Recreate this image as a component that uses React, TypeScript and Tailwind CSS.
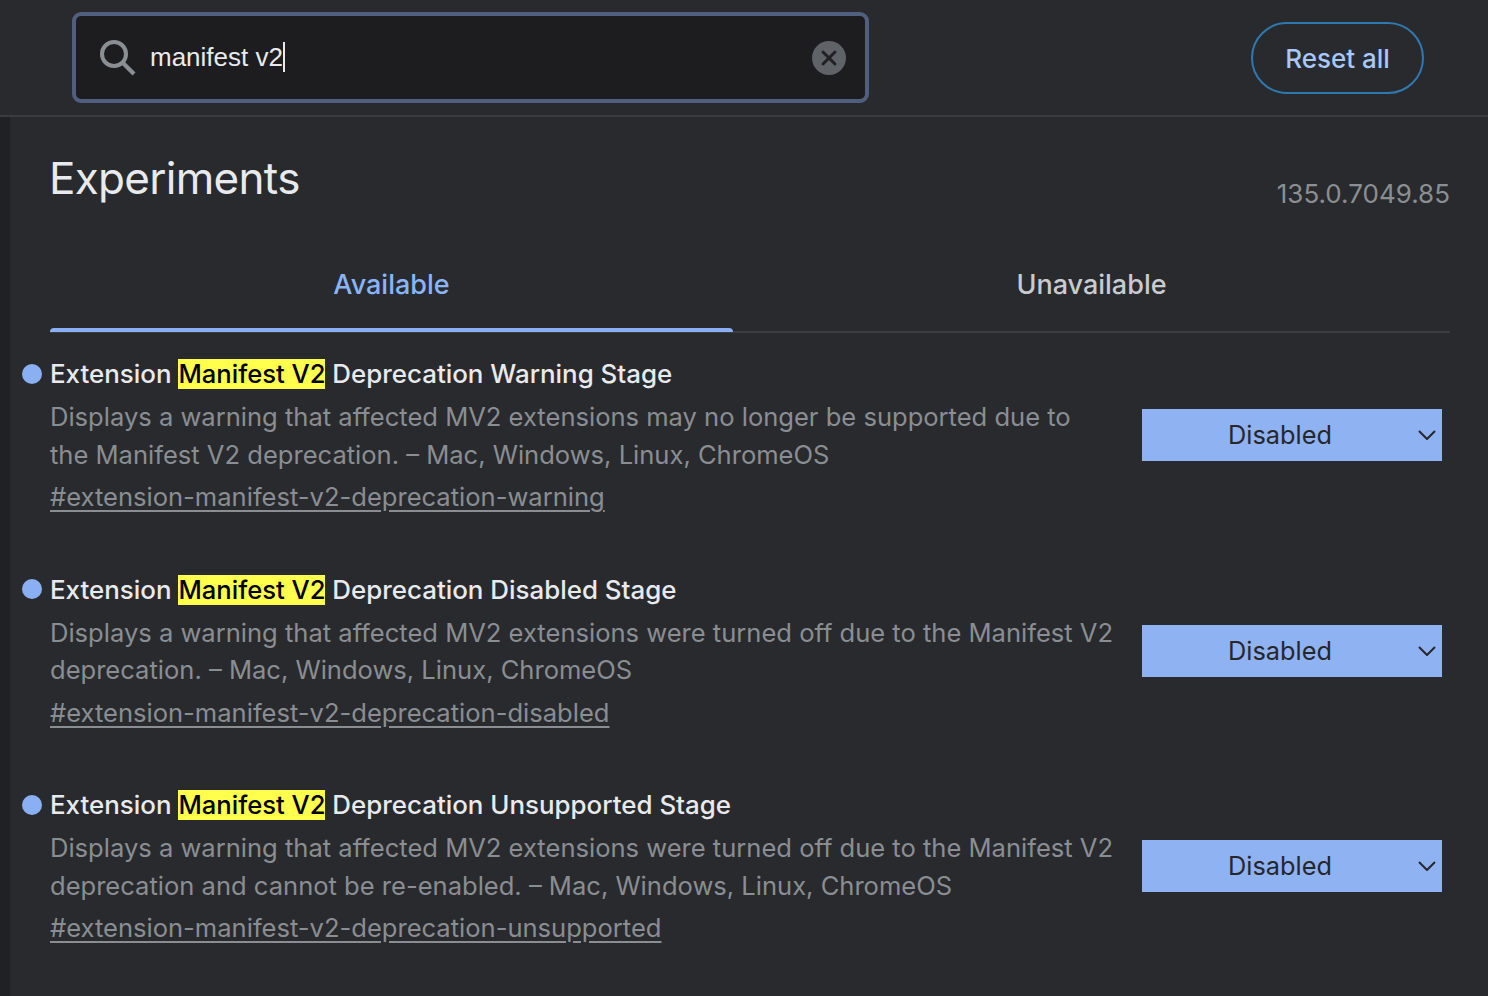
import { X } from "lucide-react";

const experiments = [
  {
    stage: "Warning",
    lines: [
      "Displays a warning that affected MV2 extensions may no longer be supported due to",
      "the Manifest V2 deprecation. – Mac, Windows, Linux, ChromeOS",
    ],
    anchor: "#extension-manifest-v2-deprecation-warning",
  },
  {
    stage: "Disabled",
    lines: [
      "Displays a warning that affected MV2 extensions were turned off due to the Manifest V2",
      "deprecation. – Mac, Windows, Linux, ChromeOS",
    ],
    anchor: "#extension-manifest-v2-deprecation-disabled",
  },
  {
    stage: "Unsupported",
    lines: [
      "Displays a warning that affected MV2 extensions were turned off due to the Manifest V2",
      "deprecation and cannot be re-enabled. – Mac, Windows, Linux, ChromeOS",
    ],
    anchor: "#extension-manifest-v2-deprecation-unsupported",
  },
];

function SearchIcon() {
  return (
    <svg width="36" height="36" viewBox="0 0 36 36" fill="none" stroke="#8a8f93" className="shrink-0">
      <circle cx="14" cy="14" r="12" strokeWidth="4" />
      <path d="M23 23 L34 34" strokeWidth="4.2" />
    </svg>
  );
}

function ExperimentRow({ stage, lines, anchor }: (typeof experiments)[number]) {
  return (
    <div className="flex h-[215.5px] items-start">
      <span className="mt-[7.5px] ml-3 h-5 w-5 shrink-0 rounded-full bg-[#8ab0f3]" />
      <div className="ml-2 w-[1092px] shrink-0">
        <h2 className="h-[34px] text-[25.9px] leading-[35.5px] font-medium whitespace-pre text-[#e8eaed]">
          Extension{" "}
          <mark className="inline-block h-[30px] bg-[#ffff4d] text-[25.6px] leading-[30px] text-black">Manifest V2</mark>{" "}
          Deprecation {stage} Stage
        </h2>
        <p className="mt-2 text-[25.55px] leading-[37.5px] whitespace-nowrap text-[#8a8e92]">
          {lines[0]}
          <br />
          {lines[1]}
        </p>
        <a className="mt-[5px] block text-[25.55px] leading-[38px] whitespace-nowrap text-[#8a8e92] underline underline-offset-[4px]">
          {anchor}
        </a>
      </div>
      <div className="relative mt-[53px] flex h-[52px] w-[300px] shrink-0 items-center justify-center bg-[#8fb2f2] pr-[24px] text-[25.3px] text-[#25272b]">
        Disabled
        <svg width="18" height="10" viewBox="0 0 18 10" fill="none" stroke="#25272b" strokeWidth="2" className="absolute top-[21px] right-[6px]">
          <path d="M1 1 L9 9 L17 1" />
        </svg>
      </div>
    </div>
  );
}

export default function App() {
  return (
    <div className="h-[996px] overflow-hidden bg-[#292a2e] font-['Inter',sans-serif] text-[#e8eaed]">
      <header className="flex h-[117px] items-start border-b-2 border-[#3b3c3e] pt-3 pl-[72px]">
        <div className="flex h-[91px] w-[797px] items-center rounded-[9px] border-4 border-[#505f80] bg-[#1d1d1f] pr-[19px] pl-6">
          <SearchIcon />
          <span className="ml-3.5 font-['Liberation_Sans',sans-serif] text-[26px] text-[#e8eaed]">manifest v2</span>
          <span className="h-[30px] w-0.5 -translate-y-px bg-[#e8eaed]" />
          <span className="ml-auto flex h-[34px] w-[34px] items-center justify-center rounded-full bg-[#5f6368] text-[#202124]">
            <X size={24} strokeWidth={3} />
          </span>
        </div>
        <button className="mt-[10px] ml-[382px] h-[72px] w-[173px] rounded-full border-2 border-[#2f79b0] text-[26px] font-medium text-[#a8c7fa]">
          Reset all
        </button>
      </header>
      <div className="flex">
        <aside className="h-[879px] w-2.5 shrink-0 bg-[#202124]" />
        <main className="w-[1478px] pr-[38px]">
          <div className="flex h-[115px] items-start justify-between pl-[39px]">
            <h1 className="mt-[30px] text-[44px] leading-[62px] tracking-[-0.7px] text-[#e8eaed]">Experiments</h1>
            <span className="mt-[59px] text-[26px] leading-9 text-[#8b8f93]">135.0.7049.85</span>
          </div>
          <div className="ml-10 flex h-[101px] border-b-2 border-[#3c3d40]">
            <div className="relative flex h-full w-[683px] items-center justify-center pt-2 text-[27px] font-medium text-[#8ab4f8]">
              Available
              <span className="absolute right-0 -bottom-px left-0 h-1 rounded-t bg-[#8ab0f3]" />
            </div>
            <div className="flex h-full flex-1 items-center justify-center pt-2 text-[27px] font-medium text-[#c8cbd0]">
              Unavailable
            </div>
          </div>
          <div className="pt-[23px]">
            {experiments.map((item) => (
              <ExperimentRow key={item.stage} {...item} />
            ))}
          </div>
        </main>
      </div>
    </div>
  );
}
